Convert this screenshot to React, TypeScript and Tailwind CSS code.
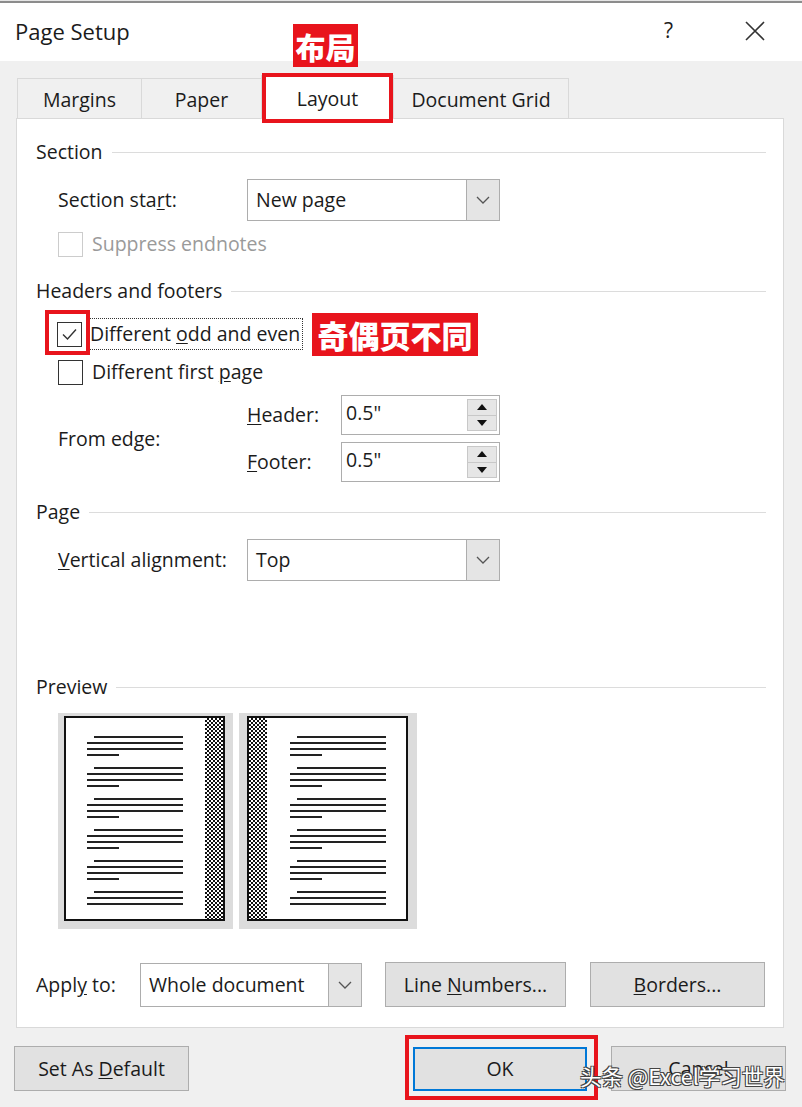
import React from "react";

function Chevron() {
  return (
    <svg width="14" height="8" viewBox="0 0 14 8">
      <polyline points="1,1 7,7 13,1" fill="none" stroke="#555" strokeWidth="1.3" />
    </svg>
  );
}

function Select({ value, className }: { value: string; className: string }) {
  return (
    <div className={`flex border border-[#adadad] bg-white ${className}`}>
      <div className="flex flex-1 items-center pl-[8px]">{value}</div>
      <div className="flex w-[33px] items-center justify-center border-l border-[#adadad] bg-[#e5e5e5]">
        <Chevron />
      </div>
    </div>
  );
}

function Tri({ up }: { up: boolean }) {
  return (
    <svg width="10" height="6" viewBox="0 0 10 6">
      <polygon points={up ? "0,6 5,0 10,6" : "0,0 10,0 5,6"} fill="#111" />
    </svg>
  );
}

function Spin({ value }: { value: string }) {
  return (
    <div className="flex h-[40px] w-[159px] border border-[#adadad] bg-white">
      <div className="flex flex-1 items-center pb-[5px] pl-[4px]">{value}</div>
      <div className="flex w-[32px] flex-col py-[3px] pr-[2px]">
        <div className="flex flex-1 items-center justify-center border border-[#c8c8c8] bg-[#e6e6e6]">
          <Tri up />
        </div>
        <div className="flex flex-1 items-center justify-center border border-t-0 border-[#c8c8c8] bg-[#e6e6e6]">
          <Tri up={false} />
        </div>
      </div>
    </div>
  );
}

function Box({ checked, disabled }: { checked?: boolean; disabled?: boolean }) {
  return (
    <div
      className={`flex h-[25px] w-[25px] items-center justify-center border bg-white ${
        disabled ? "border-[#cccccc]" : "border-[#333333]"
      }`}
    >
      {checked && (
        <svg width="19" height="19" viewBox="0 0 19 19">
          <polyline points="3,9.5 7.5,14 16,4.5" fill="none" stroke="#333" strokeWidth="1.4" />
        </svg>
      )}
    </div>
  );
}

function GroupHeader({ title, className }: { title: string; className: string }) {
  return (
    <div className={`flex h-[30px] items-center pr-[17px] ${className}`}>
      <span>{title}</span>
      <div className="ml-[9px] h-px flex-1 bg-[#dcdcdc]" />
    </div>
  );
}

function Lines({ right }: { right?: boolean }) {
  const groups = [4, 4, 4, 4, 4, 3];
  return (
    <div className={`flex flex-col gap-[11px] pt-[18px] ${right ? "pl-[23px]" : "pl-[21px]"}`}>
      {groups.map((n, i) => (
        <div key={i} className="flex flex-col gap-[4px]">
          {Array.from({ length: n }).map((_, j) => (
            <div
              key={j}
              className={`h-[2px] bg-[#222] ${
                j === 0 ? "ml-[7px] w-[89px]" : j === 3 ? "w-[32px]" : "w-[96px]"
              }`}
            />
          ))}
        </div>
      ))}
    </div>
  );
}

function Checker() {
  return (
    <div className="h-full w-[18px] bg-[repeating-conic-gradient(#111_0_25%,#fff_0_50%)] bg-[length:4px_4px]" />
  );
}

function Button({ children, className }: { children: React.ReactNode; className: string }) {
  return (
    <div className={`flex items-center justify-center border border-[#adadad] bg-[#e1e1e1] ${className}`}>
      {children}
    </div>
  );
}

export default function App() {
  return (
    <div className="relative h-[1107px] w-[802px] overflow-hidden bg-[#f0f0f0] font-['Open_Sans',sans-serif] text-[19.5px] text-[#1b1b1b]">
      <div className="h-[1px] bg-[#e4e4e4]" />
      <div className="h-[2px] bg-[#8c8c8c]" />
      {/* Title bar */}
      <div className="flex h-[58px] items-center bg-white pb-[2px]">
        <span className="ml-[15px] text-[22px]">Page Setup</span>
        <span className="ml-auto text-[21px]">?</span>
        <svg className="ml-[72px] mr-[37px]" width="20" height="20" viewBox="0 0 20 20">
          <path d="M1 1 L19 19 M19 1 L1 19" stroke="#333" strokeWidth="1.6" />
        </svg>
      </div>

      {/* Tabs */}
      <div className="ml-[17px] mt-[17px] flex h-[40px] items-end">
        <div className="flex h-[40px] w-[124px] items-center justify-center border-l border-t border-[#d9d9d9] pt-[2px]">
          Margins
        </div>
        <div className="flex h-[40px] w-[120px] items-center justify-center border-l border-t border-[#d9d9d9] pt-[2px]">
          Paper
        </div>
        <div className="relative z-10 -mb-px flex h-[44px] w-[133px] items-center justify-center border border-b-0 border-[#d9d9d9] bg-white pt-[2px]">
          Layout
          <div className="absolute -bottom-[4px] -top-[3px] left-0 right-0 border-[4px] border-[#e8141c]" />
          <div className="absolute -top-[52px] left-[31px] flex h-[43px] w-[65px] items-center justify-center bg-[#e8141c] font-['Noto_Sans_CJK_SC',sans-serif] text-[30px] font-black leading-none text-white">
            布局
          </div>
        </div>
        <div className="flex h-[40px] w-[175px] items-center justify-center border-r border-t border-[#d9d9d9] pt-[2px]">
          Document Grid
        </div>
      </div>

      {/* Panel */}
      <div className="ml-[16px] flex h-[910px] w-[768px] flex-col border border-[#d9d9d9] bg-white pl-[19px] pt-[18px]">
        <GroupHeader title="Section" className="" />
        <div className="ml-[22px] mt-[12px] flex h-[42px] items-center">
          <span className="w-[189px]">
            Section sta<u className="underline-offset-2">r</u>t:
          </span>
          <Select value="New page" className="h-[42px] w-[253px]" />
        </div>
        <div className="ml-[22px] mt-[10px] flex h-[26px] items-center gap-[9px] text-[#9a9a9a]">
          <Box disabled />
          <span>Suppress endnotes</span>
        </div>

        <GroupHeader title="Headers and footers" className="mt-[19px]" />
        <div className="ml-[21px] mt-[12px] flex h-[32px] items-center">
          <div className="relative">
            <Box checked />
            <div className="absolute -bottom-[8px] -left-[12px] -right-[8px] -top-[12px] border-[4px] border-[#e8141c]" />
          </div>
          <div className="ml-[6px] flex h-[32px] items-center border border-dotted border-[#333] pl-[1px] pr-[2px]">
            <span>
              Different <u className="underline-offset-2">o</u>dd and even
            </span>
          </div>
          <div className="ml-[9px] flex h-[43px] w-[166px] items-center justify-center bg-[#e8141c] font-['Noto_Sans_CJK_SC',sans-serif] text-[31px] font-black leading-none text-white">
            奇偶页不同
          </div>
        </div>
        <div className="ml-[22px] mt-[9px] flex h-[26px] items-center gap-[9px]">
          <Box />
          <span>
            Different first <u className="underline-offset-2">p</u>age
          </span>
        </div>

        <div className="ml-[22px] mt-[10px] flex h-[87px] items-center">
          <span className="w-[189px]">From edge:</span>
          <div className="flex flex-col gap-[7px]">
            <div className="flex items-center">
              <span className="w-[94px]">
                <u className="underline-offset-2">H</u>eader:
              </span>
              <Spin value={'0.5"'} />
            </div>
            <div className="flex items-center">
              <span className="w-[94px]">
                <u className="underline-offset-2">F</u>ooter:
              </span>
              <Spin value={'0.5"'} />
            </div>
          </div>
        </div>

        <GroupHeader title="Page" className="mt-[15px]" />
        <div className="ml-[22px] mt-[12px] flex h-[42px] items-center">
          <span className="w-[189px]">
            <u className="underline-offset-2">V</u>ertical alignment:
          </span>
          <Select value="Top" className="h-[42px] w-[253px]" />
        </div>

        <GroupHeader title="Preview" className="mt-[91px]" />
        <div className="ml-[22px] mt-[11px] flex gap-[6px]">
          <div className="h-[216px] w-[175px] bg-[#dcdcdc] pb-[8px] pl-[6px] pr-[8px] pt-[3px]">
            <div className="flex h-full border-2 border-[#111] bg-white">
              <div className="flex-1">
                <Lines />
              </div>
              <Checker />
            </div>
          </div>
          <div className="h-[216px] w-[178px] bg-[#dcdcdc] pb-[8px] pl-[8px] pr-[9px] pt-[3px]">
            <div className="flex h-full border-2 border-[#111] bg-white">
              <Checker />
              <div className="flex-1">
                <Lines right />
              </div>
            </div>
          </div>
        </div>

        <div className="mt-[33px] flex h-[45px] items-center">
          <span className="w-[104px]">
            Appl<u className="underline-offset-2">y</u> to:
          </span>
          <Select value="Whole document" className="h-[44px] w-[222px]" />
          <Button className="ml-[23px] h-[45px] w-[181px]">
            <span>
              Line <u className="underline-offset-2">N</u>umbers...
            </span>
          </Button>
          <Button className="ml-[24px] h-[45px] w-[175px]">
            <span>
              <u className="underline-offset-2">B</u>orders...
            </span>
          </Button>
        </div>
      </div>

      {/* Footer buttons */}
      <div className="mt-[18px] flex items-center pl-[14px]">
        <Button className="h-[45px] w-[175px]">
          <span>
            Set As <u className="underline-offset-2">D</u>efault
          </span>
        </Button>
        <div className="relative ml-[224px]">
          <div className="flex h-[44px] w-[174px] items-center justify-center border-2 border-[#0078d7] bg-[#e1e1e1]">
            OK
          </div>
          <div className="absolute -bottom-[9px] -left-[8px] -right-[11px] -top-[12px] border-[4px] border-[#e8141c]" />
        </div>
        <Button className="ml-[24px] h-[45px] w-[175px]">
          <span>Cancel</span>
        </Button>
      </div>

      {/* Watermark */}
      <div className="absolute left-[580px] top-[1061px] whitespace-nowrap font-['Noto_Sans_CJK_SC',sans-serif] text-[21.5px] leading-[30px] text-white [text-shadow:-1px_-1px_0_#444,1px_-1px_0_#444,-1px_1px_0_#444,1px_1px_0_#444]">
        头条 @Excel学习世界
      </div>
    </div>
  );
}
